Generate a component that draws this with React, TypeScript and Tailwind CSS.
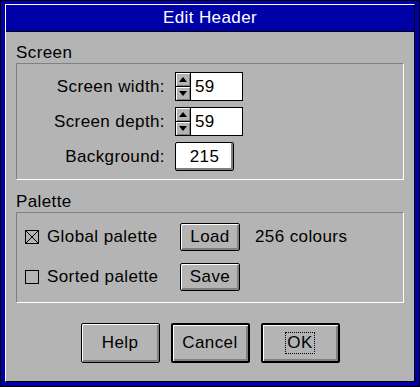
import React from "react"

const bevel =
  "bg-[#b4b4b4] shadow-[inset_1px_1px_0_#ffffff,inset_-1px_-1px_0_#808080]"

const Spinner: React.FC<{ value: string }> = ({ value }) => (
  <div className="flex h-[29px] w-[68px] border border-black bg-white">
    <div className="flex w-[15px] flex-col border-r border-black">
      <div className={`flex flex-1 items-center justify-center ${bevel}`}>
        <div className="h-0 w-0 border-x-[4px] border-b-[5px] border-x-transparent border-b-black" />
      </div>
      <div className="h-px bg-black" />
      <div className={`flex flex-1 items-center justify-center ${bevel}`}>
        <div className="h-0 w-0 border-x-[4px] border-t-[5px] border-x-transparent border-t-black" />
      </div>
    </div>
    <div className="pl-[4px] text-[17px] leading-[27px]">{value}</div>
  </div>
)

const Checkbox: React.FC<{ checked?: boolean }> = ({ checked }) => (
  <div className="h-[14px] w-[14px] border border-black">
    {checked && (
      <svg width="12" height="12" viewBox="0 0 12 12" className="block">
        <path d="M0 0L12 12M12 0L0 12" stroke="black" strokeWidth="1" />
      </svg>
    )}
  </div>
)

const SmallButton: React.FC<{ label: string }> = ({ label }) => (
  <div className="flex h-[28px] w-[60px] items-center justify-center rounded-[2px] border border-black bg-[#b4b4b4] text-[17px] shadow-[inset_1px_1px_0_#ffffff,inset_-2px_-2px_0_#808080]">
    {label}
  </div>
)

const DialogButton: React.FC<{ label: string; thick?: boolean; focus?: boolean }> = ({
  label,
  thick,
  focus,
}) => (
  <div
    className={`flex h-[40px] w-[79px] items-center justify-center rounded-[2px] bg-[#b4b4b4] text-[17px] shadow-[inset_1px_1px_0_#ffffff,inset_-2px_-2px_0_#808080] ${
      thick ? "border-2 border-black" : "border border-black"
    }`}
  >
    {focus ? (
      <span className="border border-dotted border-black px-[1px] leading-[20px]">{label}</span>
    ) : (
      label
    )}
  </div>
)

const App: React.FC = () => {
  return (
    <div
      className="h-[387px] w-[420px] bg-black p-px tracking-[0.4px] text-black"
      style={{ fontFamily: '"Liberation Sans", Arial, sans-serif' }}
    >
      <div className="h-full w-full bg-[#0000a8] px-[4px] pt-[3px] pb-[4px]">
        <div className="flex h-full w-full flex-col border-t border-l border-t-white border-l-white border-r border-b border-r-black border-b-black">
          <div className="flex h-[27px] items-center justify-center border-b border-black bg-[#0000a8] text-[17px] text-white">
            Edit Header
          </div>

          <div className="flex flex-1 flex-col bg-[#b4b4b4] px-[10px] pt-[11px]">
            <div className="h-[20px] text-[17px] leading-[20px]">Screen</div>
            <div className="border border-t-[#808080] border-l-[#808080] border-r-white border-b-white pt-[8px] pb-[8px]">
              <div className="grid grid-cols-[148px_auto] items-center gap-x-[10px] gap-y-[6px] text-[17px]">
                <div className="text-right">Screen width:</div>
                <Spinner value="59" />
                <div className="text-right">Screen depth:</div>
                <Spinner value="59" />
                <div className="text-right">Background:</div>
                <div className="flex h-[29px] w-[59px] items-center justify-center rounded-[2px] border border-black bg-white shadow-[inset_-2px_-2px_0_#808080]">
                  215
                </div>
              </div>
            </div>

            <div className="mt-[12px] h-[20px] text-[17px] leading-[20px]">Palette</div>
            <div className="flex flex-col gap-[12px] border border-t-[#808080] border-l-[#808080] border-r-white border-b-white pt-[10px] pb-[11px] pl-[8px] text-[17px]">
              <div className="flex items-center">
                <div className="flex w-[155px] items-center gap-[8px]">
                  <Checkbox checked />
                  <span>Global palette</span>
                </div>
                <SmallButton label="Load" />
                <span className="ml-[15px]">256 colours</span>
              </div>
              <div className="flex items-center">
                <div className="flex w-[155px] items-center gap-[8px]">
                  <Checkbox />
                  <span>Sorted palette</span>
                </div>
                <SmallButton label="Save" />
              </div>
            </div>

            <div className="mt-[20px] flex justify-center gap-[11px]">
              <DialogButton label="Help" />
              <DialogButton label="Cancel" thick />
              <DialogButton label="OK" thick focus />
            </div>
          </div>
        </div>
      </div>
    </div>
  )
}

export default App
